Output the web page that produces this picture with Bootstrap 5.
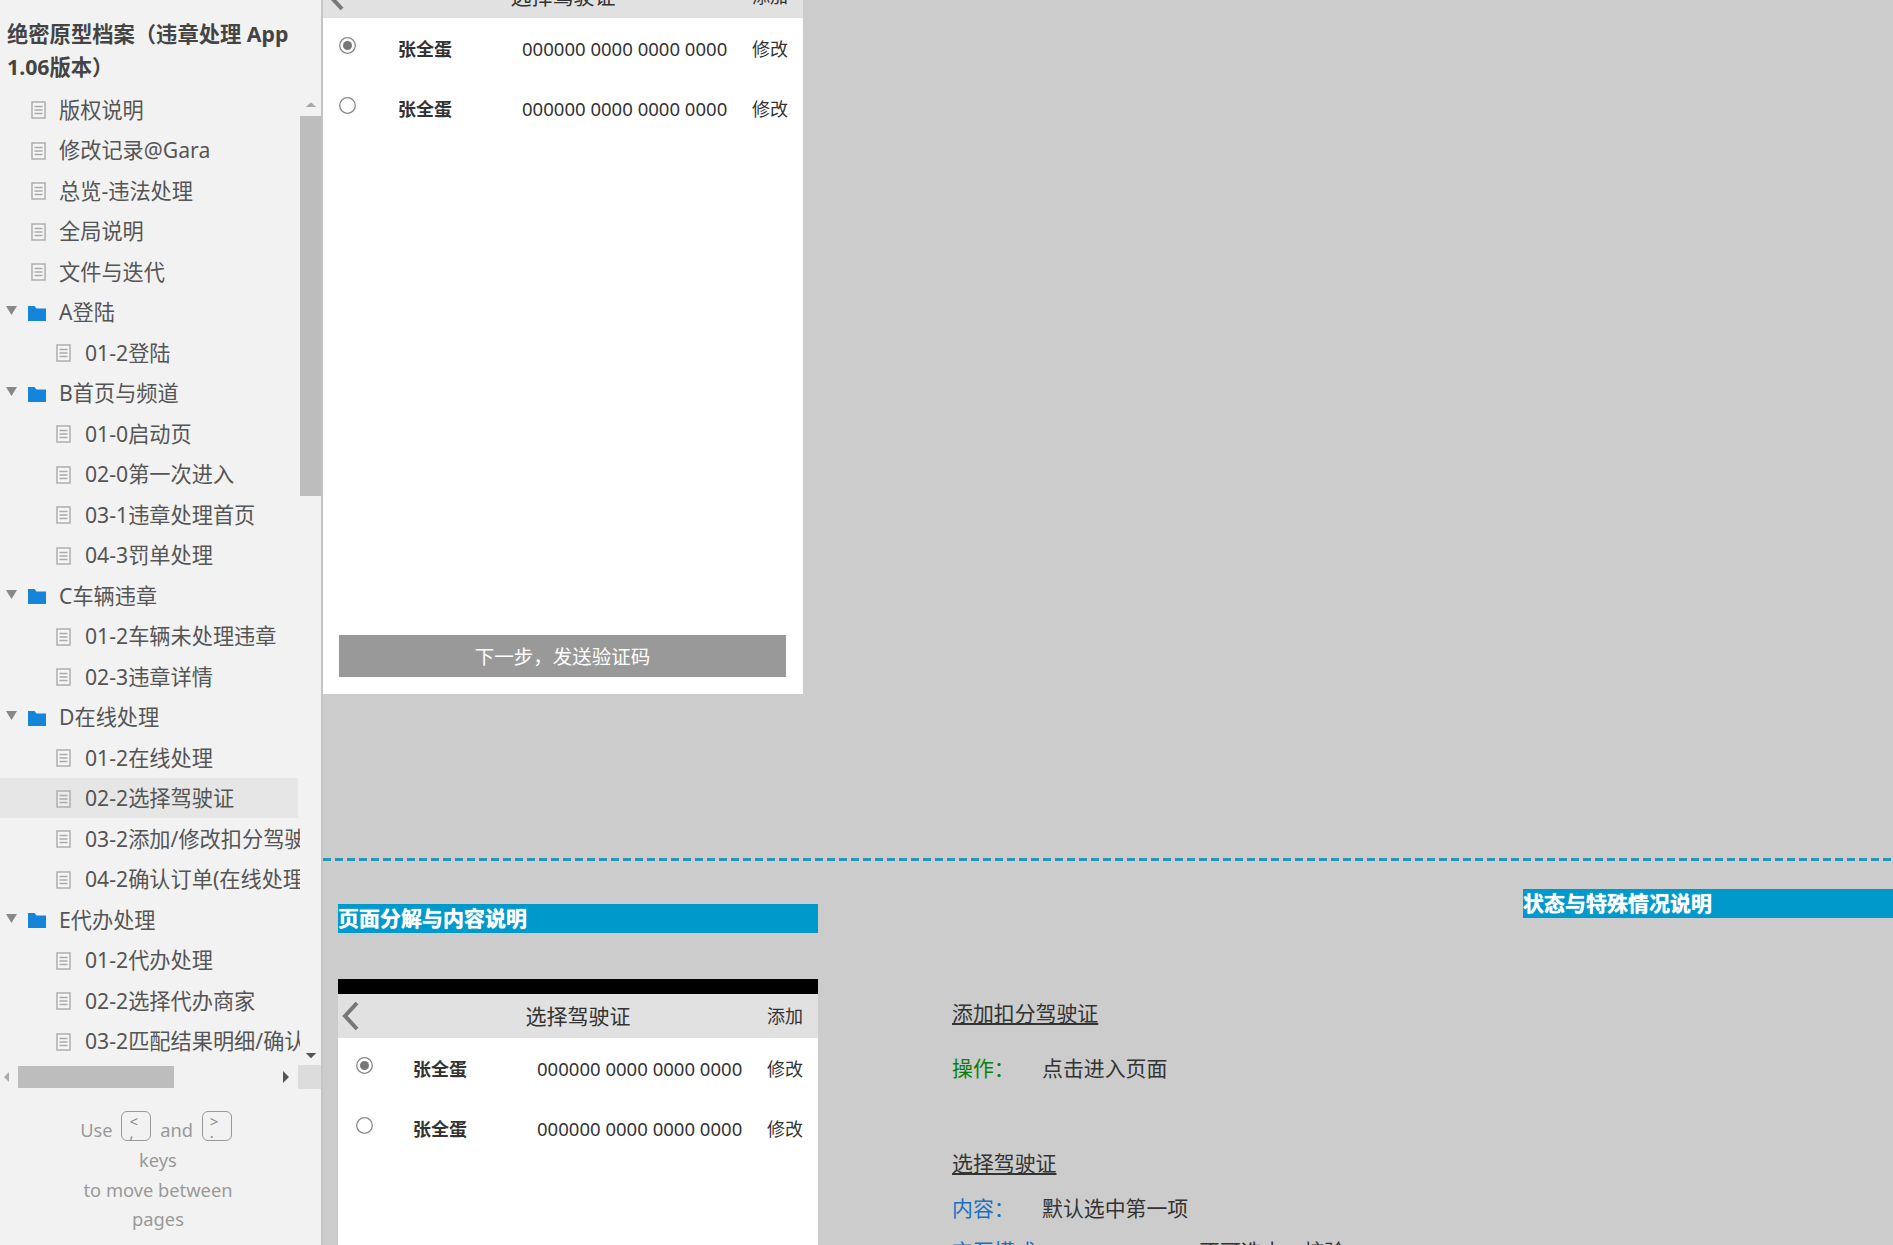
<!DOCTYPE html>
<html lang="zh-CN">
<head>
<meta charset="utf-8">
<title>选择驾驶证</title>
<link href="https://cdn.jsdelivr.net/npm/bootstrap@5.3.0/dist/css/bootstrap.min.css" rel="stylesheet">
<style>
html,body{height:100%;overflow:hidden}
body{font-family:"Noto Sans","Noto Sans CJK SC",sans-serif;background:#ccc;color:#333}
.shell{height:1245px;width:1893px;overflow:hidden}
.side{width:323px;flex:none;background:#f2f2f2;height:1245px;border-right:2px solid #c4c4c4}
.side-title{font-size:21.3px;font-weight:700;line-height:33px;padding:17px 20px 0 7px;color:#444;height:89px;margin-bottom:0}
.tree-win{height:976px}
.tree-list{width:300px;flex:none;overflow:hidden}
.tree-row{height:40.5px;display:flex;align-items:center;font-size:21.2px;color:#555;white-space:nowrap;overflow:hidden;line-height:1}
.tree-row.sub{padding-left:56px}
.tree-row.top{padding-left:31px}
.tree-row.folder{padding-left:5px}
.tree-row.picked{background:#e6e6e6;width:298px}
.doc-ic{width:15px;height:18px;flex:none;margin:2px 13px 0 0}
.tree-row.sub .doc-ic{margin-right:14px}
.tw{width:14px;height:9px;flex:none;margin-right:9px;margin-top:-2px}
.fold-ic{width:18px;height:16px;flex:none;margin:2px 13px 0 0}
.v-bar{width:21px;flex:none;background:#f2f2f2;margin-top:7px}
.v-thumb{height:380px;background:#bdbdbd;flex:none}
.v-arrow{height:20px;flex:none}
.h-bar{height:24px;background:#f2f2f2}
.h-thumb{width:156px;height:22px;background:#bdbdbd;margin-left:9px;margin-right:auto}
.h-next{margin-right:8px}
.h-corner{width:23px;height:24px;background:#dcdcdc}
.hint{font-size:18.3px;color:#999;line-height:29.8px;text-align:center;width:200px;margin:22px 0 0 58px}
.kbd-key{display:inline-block;width:30px;height:30px;border:1px solid #999;border-radius:6px;font-size:15px;line-height:11px;text-align:left;padding:4px 0 0 7px;vertical-align:-1px;color:#888;margin:0 4px;box-sizing:border-box}
.stage{flex:1;min-width:0;height:1245px;overflow:hidden}
.mock{width:480px;background:#fff;display:flex;flex-direction:column}
.mock-top{margin-top:-26px;height:720px}
.mock-nav{height:44px;background:#e1e1e1;flex:none;display:flex;align-items:center;justify-content:center;position:relative;font-size:21px;color:#333;line-height:1}
.chev{position:absolute;left:2px;top:7px;width:20px;height:30px}
.add-link{position:absolute;right:15px;top:12px;font-size:18px;line-height:20px}
.person{height:60px;display:flex;align-items:center;font-size:18px;line-height:1;color:#333}
.person .dot{width:17px;height:17px;flex:none;margin:-8px 0 0 16px}
.person .nm{font-weight:700;width:124px;margin-left:42px;flex:none}
.person .no{width:230px;flex:none;font-size:18.55px}
.person-list{padding-top:1px}
.mock-low .person .dot{margin-left:18px}
.mock-low .person .nm{margin-left:40px}
.go-btn{background:#999;border:0;border-radius:0;color:#fff;width:447px;height:42px;font-size:19.5px;margin:auto 0 17px 16px;padding:2px 0 0;line-height:1}
.go-btn:hover{background:#999;color:#fff}
.dash{height:3px;background:repeating-linear-gradient(90deg,#2496b8 0 8px,transparent 8px 12px);margin-top:164px}
.lower{height:400px}
.col-a{width:480px;margin-left:15px;flex:none;padding-top:43px}
.col-b{width:571px;margin-left:134px;flex:none;padding-top:138px;font-size:20.9px;color:#333;line-height:1.3}
.col-c{flex:1;padding-top:28px}
.band{background:#0099cc;color:#fff;height:29px;font-size:21px;font-weight:700;line-height:29px;text-shadow:0 0 1px #fff}
.mock-low{margin-top:46px;height:400px}
.black-strip{height:15px;background:#000;flex:none}
.u-head{text-decoration:underline;margin:0 0 27px;line-height:28px}
.kv{display:flex;margin:0;line-height:28px}
.kv .k{width:90px;flex:none}
.kv .k.k-wide{width:247px}
.k-green{color:#0a800a}
.k-blue{color:#1a6fbf}
.gap1{margin-bottom:67px}
.gap2{margin-bottom:15px}
.u-head.tight{margin-bottom:17px}
</style>
</head>
<body>
<svg width="0" height="0" class="d-block position-absolute">
<symbol id="doc" viewBox="0 0 15 18"><rect x="1" y="1" width="13" height="16" fill="#fff" fill-opacity=".25" stroke="#aaa" stroke-width="1.400"/><path d="M3.500 5.500h8M3.500 9h8M3.500 12.500h8" stroke="#aaa" stroke-width="1.300"/></symbol>
<symbol id="folder" viewBox="0 0 18 16"><path d="M0 1h6.500l2 2.500H18V16H0z" fill="#1585dc"/></symbol>
<symbol id="tri" viewBox="0 0 14 9"><path d="M1 0h11L6.500 9z" fill="#888"/></symbol>
</svg>
<div class="shell d-flex">
<aside class="side d-flex flex-column">
  <h1 class="side-title">绝密原型档案（违章处理 App 1.06版本）</h1>
  <div class="tree-win d-flex">
    <div class="tree-list">
      <div class="tree-row top"><svg class="doc-ic"><use href="#doc"/></svg>版权说明</div>
      <div class="tree-row top"><svg class="doc-ic"><use href="#doc"/></svg>修改记录@Gara</div>
      <div class="tree-row top"><svg class="doc-ic"><use href="#doc"/></svg>总览-违法处理</div>
      <div class="tree-row top"><svg class="doc-ic"><use href="#doc"/></svg>全局说明</div>
      <div class="tree-row top"><svg class="doc-ic"><use href="#doc"/></svg>文件与迭代</div>
      <div class="tree-row folder"><svg class="tw"><use href="#tri"/></svg><svg class="fold-ic"><use href="#folder"/></svg>A登陆</div>
      <div class="tree-row sub"><svg class="doc-ic"><use href="#doc"/></svg>01-2登陆</div>
      <div class="tree-row folder"><svg class="tw"><use href="#tri"/></svg><svg class="fold-ic"><use href="#folder"/></svg>B首页与频道</div>
      <div class="tree-row sub"><svg class="doc-ic"><use href="#doc"/></svg>01-0启动页</div>
      <div class="tree-row sub"><svg class="doc-ic"><use href="#doc"/></svg>02-0第一次进入</div>
      <div class="tree-row sub"><svg class="doc-ic"><use href="#doc"/></svg>03-1违章处理首页</div>
      <div class="tree-row sub"><svg class="doc-ic"><use href="#doc"/></svg>04-3罚单处理</div>
      <div class="tree-row folder"><svg class="tw"><use href="#tri"/></svg><svg class="fold-ic"><use href="#folder"/></svg>C车辆违章</div>
      <div class="tree-row sub"><svg class="doc-ic"><use href="#doc"/></svg>01-2车辆未处理违章</div>
      <div class="tree-row sub"><svg class="doc-ic"><use href="#doc"/></svg>02-3违章详情</div>
      <div class="tree-row folder"><svg class="tw"><use href="#tri"/></svg><svg class="fold-ic"><use href="#folder"/></svg>D在线处理</div>
      <div class="tree-row sub"><svg class="doc-ic"><use href="#doc"/></svg>01-2在线处理</div>
      <div class="tree-row sub picked"><svg class="doc-ic"><use href="#doc"/></svg>02-2选择驾驶证</div>
      <div class="tree-row sub"><svg class="doc-ic"><use href="#doc"/></svg>03-2添加/修改扣分驾驶证</div>
      <div class="tree-row sub"><svg class="doc-ic"><use href="#doc"/></svg>04-2确认订单(在线处理)</div>
      <div class="tree-row folder"><svg class="tw"><use href="#tri"/></svg><svg class="fold-ic"><use href="#folder"/></svg>E代办处理</div>
      <div class="tree-row sub"><svg class="doc-ic"><use href="#doc"/></svg>01-2代办处理</div>
      <div class="tree-row sub"><svg class="doc-ic"><use href="#doc"/></svg>02-2选择代办商家</div>
      <div class="tree-row sub"><svg class="doc-ic"><use href="#doc"/></svg>03-2匹配结果明细/确认订单</div>
    </div>
    <div class="v-bar d-flex flex-column">
      <svg class="v-arrow" viewBox="0 0 22 20"><path d="M6 11h11l-5.500-5z" fill="#aaa"/></svg>
      <div class="v-thumb"></div>
      <div class="flex-grow-1"></div>
      <svg class="v-arrow" viewBox="0 0 22 20"><path d="M6 8h11l-5.500 5.500z" fill="#555"/></svg>
    </div>
  </div>
  <div class="h-bar d-flex align-items-center">
    <svg width="5" height="12" viewBox="0 0 5 12" class="ms-1"><path d="M6 0v12L0 6z" fill="#aaa"/></svg>
    <div class="h-thumb"></div>
    <svg width="7" height="12" viewBox="0 0 7 12" class="h-next"><path d="M0 0v12l6-6z" fill="#555"/></svg>
    <div class="h-corner"></div>
  </div>
  <div class="hint">Use <span class="kbd-key">&lt;<br>,</span> and <span class="kbd-key">&gt;<br>.</span><br>keys<br>to move between<br>pages</div>
</aside>
<main class="stage">
  <section class="mock mock-top">
    <div class="mock-nav">
      <svg class="chev" viewBox="0 0 20 30"><path d="M17 2 5 15l12 13" fill="none" stroke="#777" stroke-width="4"/></svg>
      选择驾驶证<span class="add-link">添加</span>
    </div>
    <div class="person-list">
      <div class="person"><svg class="dot" viewBox="0 0 17 17"><circle cx="8.500" cy="8.500" r="7.800" fill="#fff" stroke="#888" stroke-width="1.300"/><circle cx="8.500" cy="8.500" r="4.500" fill="#777"/></svg><span class="nm">张全蛋</span><span class="no">000000 0000 0000 0000</span><span>修改</span></div>
      <div class="person"><svg class="dot" viewBox="0 0 17 17"><circle cx="8.500" cy="8.500" r="7.800" fill="#fff" stroke="#888" stroke-width="1.300"/></svg><span class="nm">张全蛋</span><span class="no">000000 0000 0000 0000</span><span>修改</span></div>
    </div>
    <button type="button" class="btn go-btn">下一步，发送验证码</button>
  </section>
  <div class="dash"></div>
  <div class="lower d-flex">
    <div class="col-a">
      <div class="band">页面分解与内容说明</div>
      <section class="mock mock-low">
        <div class="black-strip"></div>
        <div class="mock-nav">
          <svg class="chev" viewBox="0 0 20 30"><path d="M17 2 5 15l12 13" fill="none" stroke="#777" stroke-width="4"/></svg>
          选择驾驶证<span class="add-link">添加</span>
        </div>
        <div class="person-list">
          <div class="person"><svg class="dot" viewBox="0 0 17 17"><circle cx="8.500" cy="8.500" r="7.800" fill="#fff" stroke="#888" stroke-width="1.300"/><circle cx="8.500" cy="8.500" r="4.500" fill="#777"/></svg><span class="nm">张全蛋</span><span class="no">000000 0000 0000 0000</span><span>修改</span></div>
          <div class="person"><svg class="dot" viewBox="0 0 17 17"><circle cx="8.500" cy="8.500" r="7.800" fill="#fff" stroke="#888" stroke-width="1.300"/></svg><span class="nm">张全蛋</span><span class="no">000000 0000 0000 0000</span><span>修改</span></div>
        </div>
      </section>
    </div>
    <div class="col-b">
      <p class="u-head">添加扣分驾驶证</p>
      <div class="kv gap1"><span class="k k-green">操作：</span><span>点击进入页面</span></div>
      <p class="u-head tight">选择驾驶证</p>
      <div class="kv gap2"><span class="k k-blue">内容：</span><span>默认选中第一项</span></div>
      <div class="kv"><span class="k k-wide k-blue">交互模式：</span><span>不可选中，校验</span></div>
    </div>
    <div class="col-c"><div class="band">状态与特殊情况说明</div></div>
  </div>
</main>
</div>
</body>
</html>
